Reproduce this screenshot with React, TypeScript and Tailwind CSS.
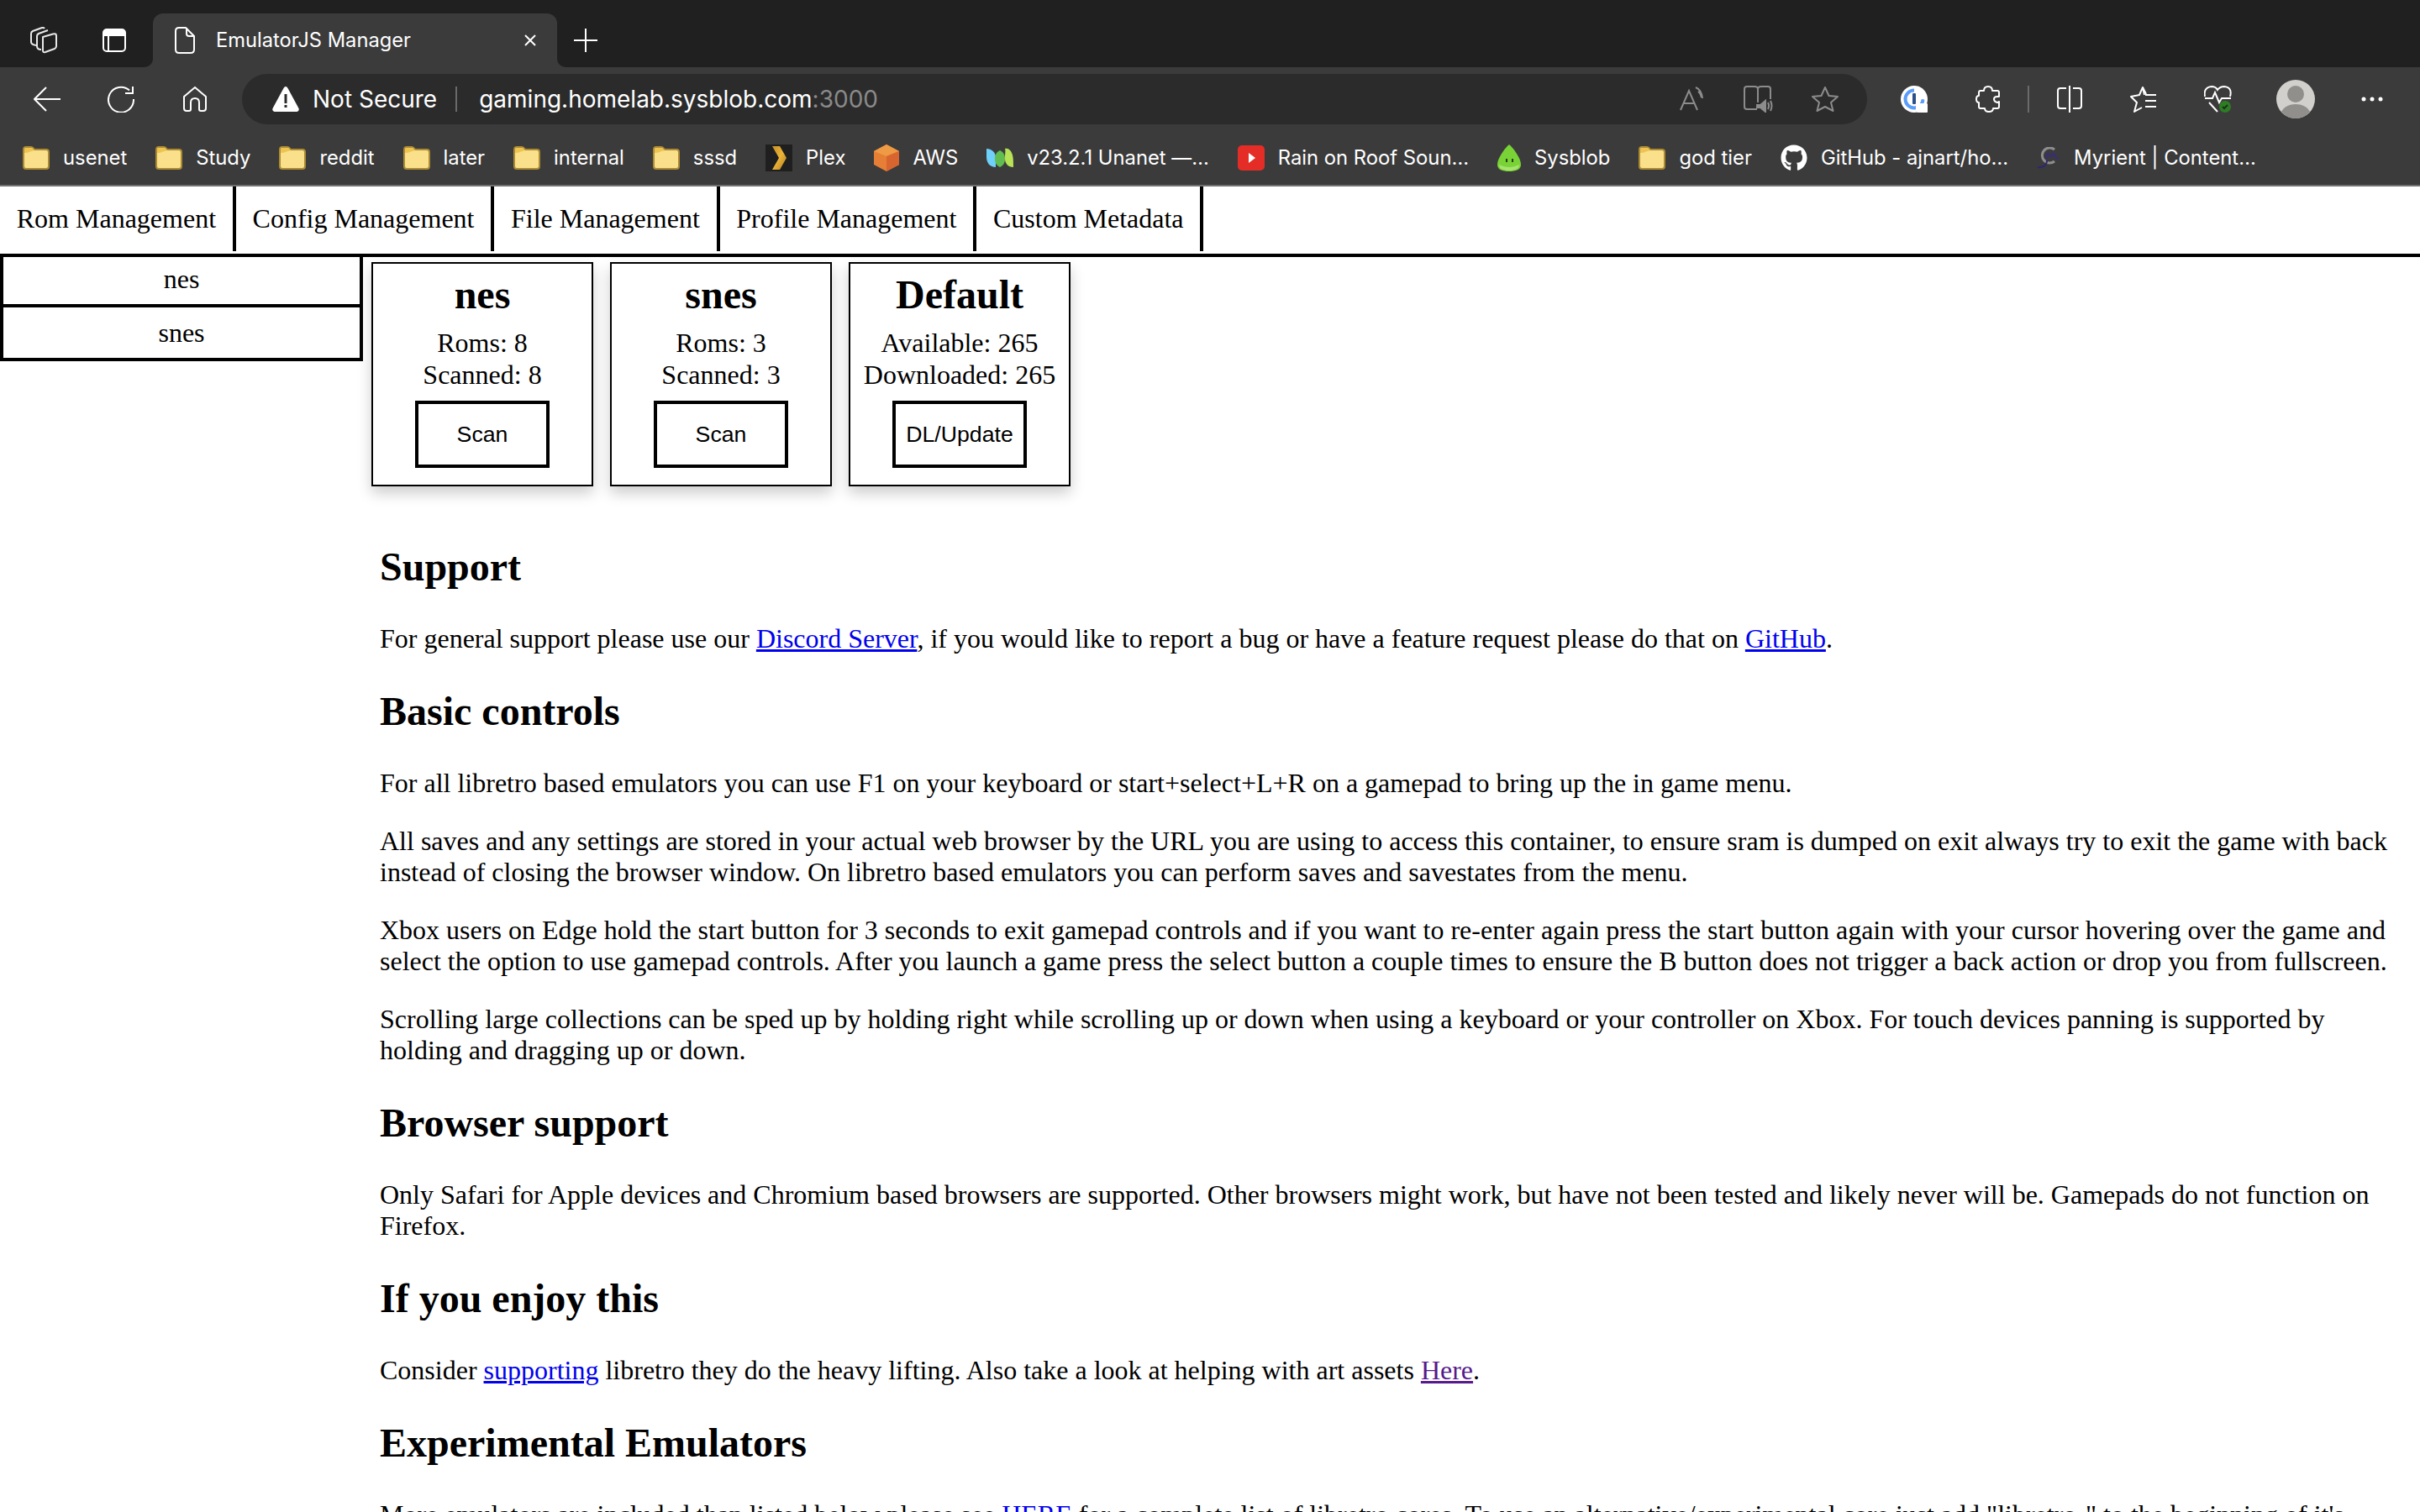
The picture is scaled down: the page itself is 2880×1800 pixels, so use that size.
import { FaGithub } from "react-icons/fa";

function Folder() {
  return (
    <svg width="32" height="28" viewBox="0 0 32 28" className="shrink-0">
      <path d="M1 4q0-3 3-3h6q2 0 3 2l1 1h14q3 0 3 3v17q0 3-3 3H4q-3 0-3-3z" fill="#fae08a" stroke="#ac8b34" strokeWidth="2" />
      <path d="M2 8V4q0-2 2-2h6q2 0 2.500 1.500L14 5 9 6.500Q6 8 2 8z" fill="#edc451" />
    </svg>
  );
}

function PlexIcon() {
  return (
    <svg width="32" height="32" viewBox="0 0 32 32" className="shrink-0">
      <defs>
        <linearGradient id="plexGold" x1="0" y1="0" x2="1" y2="1">
          <stop offset="0" stopColor="#c98f26" />
          <stop offset="0.5" stopColor="#e9b437" />
          <stop offset="1" stopColor="#b57a20" />
        </linearGradient>
      </defs>
      <rect width="32" height="32" fill="#1f1f1f" />
      <path d="M8 2h9l8 14-8 14H8l8-14z" fill="url(#plexGold)" />
    </svg>
  );
}

function AwsIcon() {
  return (
    <svg width="30" height="32" viewBox="0 0 30 32" className="shrink-0">
      <path d="M15 0l15 8v16l-15 8L0 24V8z" fill="#e67f35" />
      <path d="M15 0l15 8-15 6L0 8z" fill="#ef9a44" />
      <path d="M15 14l15-6v16l-15 8z" fill="#d8652f" />
    </svg>
  );
}

function UnanetIcon() {
  return (
    <svg width="32" height="24" viewBox="0 0 32 24" className="shrink-0">
      <path d="M0 1c6 0 11 4 11 11v11C4 23 0 18 0 11z" fill="#6fd0fa" />
      <path d="M16 3c-4 2-6 5-6 10 0 5 2 8 6 10 4-2 6-5 6-10 0-5-2-8-6-10z" fill="#62bd50" />
      <path d="M32 23c0-9 0-14-3-19-2-3-5-4-7-3 1 3 0 5 0 12 0 6 4 10 10 10z" fill="#b8e356" />
    </svg>
  );
}

function YoutubeIcon() {
  return (
    <svg width="32" height="32" viewBox="0 0 32 32" className="shrink-0">
      <rect y="1" width="32" height="30" rx="5" fill="#e42d26" />
      <path d="M13 10l8 6-8 6z" fill="#fff" />
    </svg>
  );
}

function SlimeIcon() {
  return (
    <svg width="28" height="32" viewBox="0 0 28 32" className="shrink-0">
      <path d="M14 0c4 3 14 16 14 24 0 6-6 8-14 8S0 30 0 24C0 16 10 3 14 0z" fill="#79d236" />
      <path d="M2 24c8 4 16 4 24 0 0 5-5 7-12 7S2 29 2 24z" fill="#a6e36f" />
      <rect x="10" y="17" width="2" height="4" fill="#24400e" />
      <rect x="17" y="17" width="2" height="4" fill="#24400e" />
    </svg>
  );
}

function MyrientIcon() {
  return (
    <svg width="28" height="26" viewBox="0 0 28 26" className="shrink-0">
      <path d="M21 3a9 9 0 1 0 0 14" fill="none" stroke="#8e8e8e" strokeWidth="3" />
      <path d="M11 14c0-4 2-7 3-6s1 4 3 3 2-4 3-3 1 5 6 6" fill="none" stroke="#3a2c7a" strokeWidth="2" />
      <path d="M12 16c0 6-5 9-11 8" fill="none" stroke="#2d2670" strokeWidth="2" />
    </svg>
  );
}

function Bookmark({ icon, label }: { icon: React.ReactNode; label: string }) {
  return (
    <div className="flex items-center gap-4">
      {icon}
      <span>{label}</span>
    </div>
  );
}

function BrowserChrome() {
  return (
    <div className="bg-[#3b3b3b] text-white font-['Inter',sans-serif]">
      <div className="flex h-[80px]">
        <div className="flex w-[182px] items-center rounded-br-[10px] bg-[#202020] pl-[36px] pt-4">
          <svg width="32" height="32" viewBox="0 0 32 32" fill="none" stroke="#e8e8e8" strokeWidth="2" strokeLinejoin="round">
            <path d="M15 12l12-3.500q4-1 4 2V23q0 2-2 3l-11 4q-3 1-3-2V14q0-1 0-2z" />
            <path d="M13 27q-5 0-5-4V11q0-2 2-3l11-4" />
            <path d="M7 22q-6-1-6-4V8q0-2 2-3l11-4q2-.5 3 1" />
          </svg>
          <svg width="28" height="28" viewBox="0 0 28 28" className="ml-[54px]">
            <rect x="1" y="1" width="26" height="26" rx="4" fill="none" stroke="#fff" strokeWidth="2" />
            <path d="M1 5q0-4 4-4h18q4 0 4 4v4H1z" fill="#fff" />
            <path d="M7 9v18" stroke="#fff" strokeWidth="2" />
          </svg>
        </div>
        <div className="bg-[#202020] pt-4">
          <div className="flex h-[64px] w-[481px] items-center rounded-t-[12px] bg-[#3b3b3b] pl-[26px]">
            <svg width="24" height="32" viewBox="0 0 24 32" fill="none" stroke="#fff" strokeWidth="2" strokeLinejoin="round">
              <path d="M1 5q0-4 4-4h8l10 10v16q0 4-4 4H5q-4 0-4-4z" />
              <path d="M14 1v7q0 3 3 3h6" />
            </svg>
            <span className="ml-[25px] w-[366px] text-[23.7px] leading-none">EmulatorJS Manager</span>
            <svg width="16" height="16" viewBox="0 0 16 16" stroke="#fff" strokeWidth="2">
              <path d="M2 2l12 12M14 2L2 14" />
            </svg>
          </div>
        </div>
        <div className="flex flex-1 items-center rounded-bl-[10px] bg-[#202020] pl-[20px] pt-4">
          <svg width="28" height="28" viewBox="0 0 28 28" stroke="#fff" strokeWidth="2">
            <path d="M14 0v28M0 14h28" />
          </svg>
        </div>
      </div>

      <div className="flex h-[76px] items-start pt-2">
        <div className="flex h-[60px] items-center pl-[40px]">
          <svg width="32" height="30" viewBox="0 0 32 30" fill="none" stroke="#fff" strokeWidth="2">
            <path d="M32 15H2M15 1L1 15l14 14" />
          </svg>
          <svg width="32" height="32" viewBox="0 0 32 32" fill="none" stroke="#fff" strokeWidth="2" className="ml-[56px]">
            <path d="M26 5.500A15 15 0 1 0 31 16" />
            <path d="M30 1v8h-9" />
          </svg>
          <svg width="28" height="30" viewBox="0 0 28 30" fill="none" stroke="#fff" strokeWidth="2" strokeLinejoin="round" className="ml-[58px] mr-[42px]">
            <path d="M1 12L14 1l13 11v14q0 3-3 3h-3q-2 0-2-2v-8q0-5-5-5t-5 5v8q0 2-2 2H4q-3 0-3-3z" />
          </svg>
        </div>
        <div className="flex h-[60px] w-[1934px] items-center rounded-full bg-[#2b2b2b] pl-[36px] pr-[34px]">
          <svg width="32" height="30" viewBox="0 0 32 30">
            <path d="M16 0q1.500 0 2.500 2L31.500 26q1 3-2 4H2.500q-3-1-2-4L13.500 2Q14.500 0 16 0z" fill="#fff" />
            <rect x="14.500" y="9" width="3" height="11" fill="#2b2b2b" />
            <rect x="14.500" y="22" width="3" height="3" fill="#2b2b2b" />
          </svg>
          <span className="ml-4 text-[28px] leading-none">Not Secure</span>
          <div className="ml-[22px] h-[30px] w-[2px] bg-[#6a6a6a]" />
          <span className="ml-[26px] text-[28px] leading-none">
            gaming.homelab.sysblob.com<span className="text-[#8a8a8a]">:3000</span>
          </span>
          <div className="ml-auto flex items-center">
            <svg width="32" height="30" viewBox="0 0 32 30" fill="none" stroke="#8c8c8c" strokeWidth="2">
              <path d="M1 28L11 5l10 23M5 20h12" />
              <path d="M19 2q7 3 8 13M22 7q3 2 4 7" transform="translate(0 -1)" />
            </svg>
            <svg width="36" height="32" viewBox="0 0 36 32" fill="none" stroke="#8c8c8c" strokeWidth="2" className="ml-[44px]">
              <path d="M16 28H4q-3 0-3-3V4q0-3 3-3h9q4 0 4 3v16M17 4q0-3 4-3h8q3 0 3 3v12" />
              <path d="M16 23h4l6-5v13l-6-5h-4z" fill="#8c8c8c" />
              <path d="M29 20q2 4 0 8M32 18q3 6 0 12" />
            </svg>
            <svg width="32" height="30" viewBox="0 0 32 30" fill="none" stroke="#8c8c8c" strokeWidth="2" strokeLinejoin="round" className="ml-[45px]">
              <path d="M16 1l4.500 10L31 12l-8 7 2.500 10L16 24 6.500 29 9 19l-8-7 10.500-1z" />
            </svg>
          </div>
        </div>
        <div className="flex h-[60px] items-center">
          <svg width="32" height="32" viewBox="0 0 32 32" className="ml-[40px]">
            <circle cx="16" cy="16" r="16" fill="#fff" />
            <path d="M16 3.500A12.500 12.500 0 1 0 28.500 16h-4A8.500 8.500 0 1 1 16 7.500z" fill="#5a9dfb" />
            <rect x="14" y="9" width="4" height="13" rx="1" fill="#2b4f86" />
            <path d="M22 22v-3a4 4 0 0 1 8 0v3" fill="none" stroke="#fff" strokeWidth="2" />
            <rect x="18" y="21" width="15" height="11" rx="3" fill="#fff" />
          </svg>
          <svg width="30" height="32" viewBox="0 0 30 32" fill="none" stroke="#fff" strokeWidth="2" strokeLinejoin="round" className="ml-[57px]">
            <path d="M10 6q0-5 5-5t5 5h6q2 0 2 2v5q-1 0-2 0-4 0-4 3t4 4q1 0 2-1v6q0 2-2 2h-5q0 4-5 4t-5-4H6q-2 0-2-2v-5q-3 0-3-4t3-4V8q0-2 2-2z" />
          </svg>
          <div className="ml-[32px] h-[32px] w-[2px] bg-[#6a6a6a]" />
          <svg width="32" height="32" viewBox="0 0 32 32" fill="none" stroke="#fff" strokeWidth="2" className="ml-[32px]">
            <path d="M12 3H5Q2 3 2 6v18q0 3 3 3h7M20 3h7q3 0 3 3v18q0 3-3 3h-7M16 0v32" />
          </svg>
          <svg width="32" height="32" viewBox="0 0 32 32" fill="none" stroke="#fff" strokeWidth="2" strokeLinejoin="round" className="ml-[56px]">
            <path d="M17 11L15 2l-4 9-10 2 7 7-3 11 9-5" />
            <path d="M15 2l4 8M18 11h13M18 18h13M18 25h13" />
          </svg>
          <svg width="34" height="34" viewBox="0 0 34 34" fill="none" stroke="#fff" strokeWidth="2" className="ml-[56px]">
            <path d="M1 14Q-1 3 9 2q5 0 7 4 3-4 8-4 10 1 7 12" />
            <path d="M1 16h9l3-7 5 12 3-5h11" />
            <path d="M6 21l10 11" />
            <circle cx="25" cy="26" r="7" fill="#2e7d24" stroke="none" />
            <path d="M22 26l2 2 4-4" stroke="#17331a" />
          </svg>
          <svg width="46" height="46" viewBox="0 0 46 46" className="ml-[52px]">
            <circle cx="23" cy="23" r="23" fill="#d1d0cc" />
            <circle cx="23" cy="17" r="10" fill="#918f8b" />
            <path d="M6 38c3-6 10-9 17-9s14 3 17 9c-4 5-10 8-17 8S10 43 6 38z" fill="#918f8b" />
          </svg>
          <svg width="28" height="8" viewBox="0 0 28 8" fill="#fff" className="ml-[54px]">
            <circle cx="4" cy="4" r="2.500" />
            <circle cx="14" cy="4" r="2.500" />
            <circle cx="24" cy="4" r="2.500" />
          </svg>
        </div>
      </div>

      <div className="flex h-[66px] items-center gap-[34px] border-b-2 border-[#707070] pl-[27px] text-[23.8px]">
        <Bookmark icon={<Folder />} label="usenet" />
        <Bookmark icon={<Folder />} label="Study" />
        <Bookmark icon={<Folder />} label="reddit" />
        <Bookmark icon={<Folder />} label="later" />
        <Bookmark icon={<Folder />} label="internal" />
        <Bookmark icon={<Folder />} label="sssd" />
        <Bookmark icon={<PlexIcon />} label="Plex" />
        <Bookmark icon={<AwsIcon />} label="AWS" />
        <Bookmark icon={<UnanetIcon />} label="v23.2.1 Unanet —…" />
        <Bookmark icon={<YoutubeIcon />} label="Rain on Roof Soun…" />
        <Bookmark icon={<SlimeIcon />} label="Sysblob" />
        <Bookmark icon={<Folder />} label="god tier" />
        <Bookmark icon={<FaGithub className="h-8 w-8 shrink-0 text-white" />} label="GitHub - ajnart/ho…" />
        <Bookmark icon={<MyrientIcon />} label="Myrient | Content…" />
      </div>
    </div>
  );
}

const navItems = ["Rom Management", "Config Management", "File Management", "Profile Management", "Custom Metadata"];

const cards = [
  { title: "nes", a: "Roms: 8", b: "Scanned: 8", action: "Scan" },
  { title: "snes", a: "Roms: 3", b: "Scanned: 3", action: "Scan" },
  { title: "Default", a: "Available: 265", b: "Downloaded: 265", action: "DL/Update" },
];

function Card({ title, a, b, action }: { title: string; a: string; b: string; action: string }) {
  return (
    <div className="flex h-[267px] w-[264px] flex-col items-center border-2 border-black bg-white pt-[9px] shadow-[0_8px_16px_0_rgba(0,0,0,0.2)]">
      <div className="text-[48px] font-bold leading-[55px]">{title}</div>
      <div className="mt-[10px] leading-[40px]">{a}</div>
      <div className="leading-[37px]">{b}</div>
      <button className="mt-[12px] h-[80px] w-[160px] border-4 border-black bg-white font-['Liberation_Sans',sans-serif] text-[26.67px]">
        {action}
      </button>
    </div>
  );
}

const h2 = "my-[40px] text-[48px] font-bold leading-[55px]";
const para = "my-8 leading-[37px]";
const link = "text-[#0000ee] underline";

export default function App() {
  return (
    <div className="h-[1800px] w-[2880px] overflow-hidden bg-white font-['Liberation_Serif',serif] text-[32px] text-black">
      <BrowserChrome />
      <div className="flex border-b-4 border-black pb-[3px]">
        {navItems.map((item) => (
          <div key={item} className="border-r-4 border-black px-[19.75px] py-5 leading-[37px]">
            {item}
          </div>
        ))}
      </div>
      <div className="flex items-start">
        <div className="w-[432px] shrink-0 text-center">
          <div className="flex h-[60px] items-center justify-center border-x-4 border-b-4 border-black pb-[4px]">nes</div>
          <div className="flex h-[64px] items-center justify-center border-x-4 border-b-4 border-black">snes</div>
        </div>
        <div className="min-w-0 flex-1">
          <div className="ml-[10px] mt-[6px] flex gap-5">
            {cards.map((c) => (
              <Card key={c.title} {...c} />
            ))}
          </div>
          <div className="mx-5 mt-[68px]">
            <h2 className={h2}>Support</h2>
            <p className={para}>
              For general support please use our <a className={link}>Discord Server</a>, if you would like to report a bug or have a feature request please do that on <a className={link}>GitHub</a>.
            </p>
            <h2 className={h2}>Basic controls</h2>
            <p className={para}>
              For all libretro based emulators you can use F1 on your keyboard or start+select+L+R on a gamepad to bring up the in game menu.
            </p>
            <p className={para}>
              All saves and any settings are stored in your actual web browser by the URL you are using to access this container, to ensure sram is dumped on exit always try to exit the game with back instead of closing the browser window. On libretro based emulators you can perform saves and savestates from the menu.
            </p>
            <p className={para}>
              Xbox users on Edge hold the start button for 3 seconds to exit gamepad controls and if you want to re-enter again press the start button again with your cursor hovering over the game and select the option to use gamepad controls. After you launch a game press the select button a couple times to ensure the B button does not trigger a back action or drop you from fullscreen.
            </p>
            <p className={para}>
              Scrolling large collections can be sped up by holding right while scrolling up or down when using a keyboard or your controller on Xbox. For touch devices panning is supported by holding and dragging up or down.
            </p>
            <h2 className={h2}>Browser support</h2>
            <p className={para}>
              Only Safari for Apple devices and Chromium based browsers are supported. Other browsers might work, but have not been tested and likely never will be. Gamepads do not function on Firefox.
            </p>
            <h2 className={h2}>If you enjoy this</h2>
            <p className={para}>
              Consider <a className={link}>supporting</a> libretro they do the heavy lifting. Also take a look at helping with art assets <a className="text-[#551a8b] underline">Here</a>.
            </p>
            <h2 className={h2}>Experimental Emulators</h2>
            <p className={para}>
              More emulators are included than listed below please see <a className={link}>HERE</a> for a complete list of libretro cores. To use an alternative/experimental core just add "libretro-" to the beginning of it's
            </p>
          </div>
        </div>
      </div>
    </div>
  );
}
